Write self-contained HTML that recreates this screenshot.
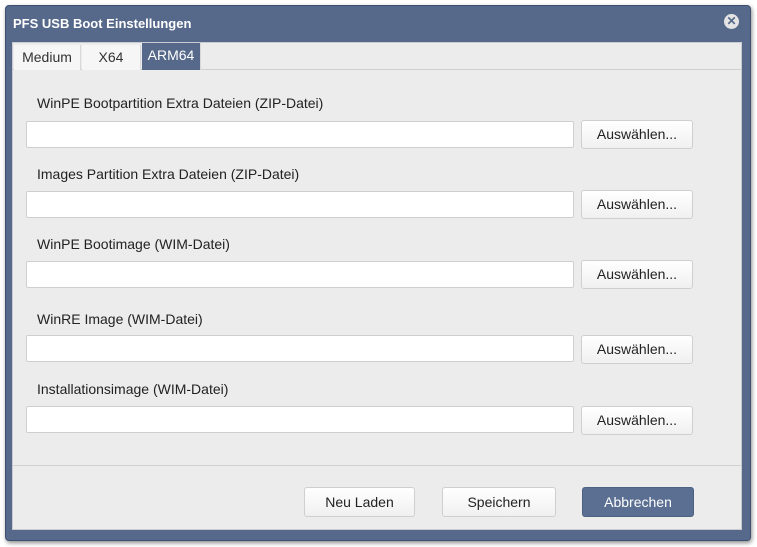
<!DOCTYPE html>
<html><head><meta charset="utf-8"><style>
*{box-sizing:border-box;margin:0;padding:0}
body{width:757px;height:547px;background:#fff;position:relative;overflow:hidden;font-family:"Liberation Sans",sans-serif}
.win{position:absolute;left:5px;top:5px;width:746px;height:536px;background:#56698a;border:1px solid #3e5070;border-radius:4px;box-shadow:1px 2px 4px rgba(0,0,0,.45)}
.title{position:absolute;left:7px;top:10px;color:#fff;font-weight:bold;font-size:13px}
.close{position:absolute;left:718px;top:8px;width:15px;height:15px;border-radius:50%;background:#e4e4e4;color:#56698a;font-size:12px;font-weight:bold;line-height:15px;text-align:center}
.body{position:absolute;left:6px;top:36px;width:730px;height:488px;background:#ececec;border:1px solid #c8ccd2}
.tabs{position:absolute;left:0;top:0;width:728px;height:27px;border-bottom:1px solid #d0d0d0;background:#ececec}
.tab{position:absolute;top:2px;height:25px;font-size:14px;line-height:25px;text-align:center;color:#333;background:#f6f6f6;border-right:1px solid #d8d8d8}
.lab{position:absolute;left:24px;font-size:14px;color:#222}
.inp{position:absolute;left:13px;width:548px;height:27px;background:#fff;border:1px solid #cfcfcf;border-radius:2px}
.btn{position:absolute;width:112px;height:29px;border:1px solid #cfcfcf;border-radius:3px;background:linear-gradient(#fff,#f0f0f0);font-size:14px;line-height:27px;text-align:center;color:#222}
.sep{position:absolute;left:0;top:422px;width:728px;height:1px;background:#d0d0d0}
</style></head><body>
<div class="win">
<div class="title">PFS USB Boot Einstellungen</div>
<div class="close">✕</div>
<div class="body">
<div class="tabs">
<div class="tab" style="left:1px;width:67px">Medium</div>
<div class="tab" style="left:69px;width:59px">X64</div>
<div class="tab" style="left:129px;width:59px;background:#56698a;color:#fff;top:0;height:27px">ARM64</div>
</div>
<div class="lab" style="top:52px">WinPE Bootpartition Extra Dateien (ZIP-Datei)</div>
<div class="inp" style="top:78px"></div><div class="btn" style="left:568px;top:77px">Auswählen...</div>
<div class="lab" style="top:123px">Images Partition Extra Dateien (ZIP-Datei)</div>
<div class="inp" style="top:148px"></div><div class="btn" style="left:568px;top:147px">Auswählen...</div>
<div class="lab" style="top:193px">WinPE Bootimage (WIM-Datei)</div>
<div class="inp" style="top:218px"></div><div class="btn" style="left:568px;top:217px">Auswählen...</div>
<div class="lab" style="top:268px">WinRE Image (WIM-Datei)</div>
<div class="inp" style="top:292px"></div><div class="btn" style="left:568px;top:292px">Auswählen...</div>
<div class="lab" style="top:338px">Installationsimage (WIM-Datei)</div>
<div class="inp" style="top:363px"></div><div class="btn" style="left:568px;top:363px">Auswählen...</div>
<div class="sep"></div>
<div class="btn" style="left:291px;top:444px;width:111px;height:30px;line-height:28px">Neu Laden</div>
<div class="btn" style="left:429px;top:444px;width:114px;height:30px;line-height:28px">Speichern</div>
<div class="btn" style="left:569px;top:444px;width:112px;height:30px;line-height:28px;background:#5a6f92;border-color:#4d6283;color:#fff">Abbrechen</div>
</div>
</div>
</body></html>
